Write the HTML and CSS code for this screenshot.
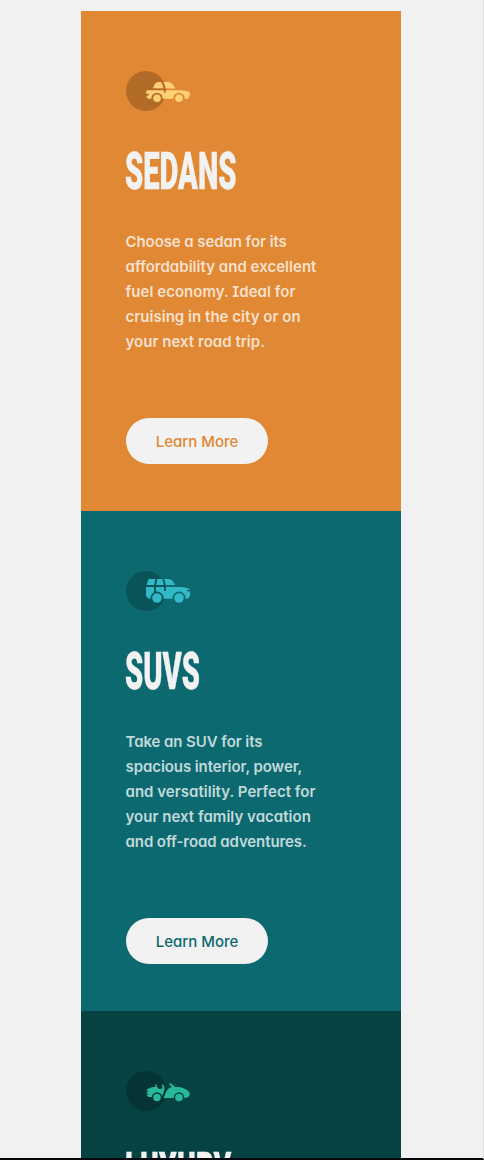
FILE: index.html
```
<!DOCTYPE html>
<html lang="en">
<head>
<meta charset="utf-8">
<title>Car categories</title>
<link rel="stylesheet" href="styles.css">
</head>
<body>
<main class="cards">
  <section class="card sedans">
    <svg class="icon" viewBox="0 0 64 40" aria-hidden="true">
      <defs><mask id="m1"><rect width="64" height="40" fill="#fff"/><circle cx="31" cy="27.3" r="5.6"/><circle cx="53" cy="27.3" r="5.6"/><path d="M35.5 10.5Q38.8 14 39 21.5" fill="none" stroke="#000" stroke-width="2"/></mask></defs>
      <circle cx="20" cy="20" r="20" fill="#000" opacity=".2"/>
      <g fill="#ffd075"><path mask="url(#m1)" d="M27 17.3Q29 11 32 11H42Q46.5 11 49.3 17.5ZM21 19.2H56Q61.5 19.6 64 21.2Q63.8 25.5 62 27.8H22Q20.5 26.5 20.5 25L23 24V23L20 22.5Q20 20 21 19.2Z"/><circle cx="31" cy="27.3" r="3.8"/><circle cx="53" cy="27.3" r="3.8"/></g>
    </svg>
    <h2 class="title"><span class="condensed">SEDANS</span></h2>
    <p class="copy"><span class="snug">Choose a sedan for its</span><br>affordability and excellent<br>fuel economy. Ideal for<br>cruising in the city or on<br>your next road trip.</p>
    <a class="button">Learn More</a>
  </section>
  <section class="card suvs">
    <svg class="icon" viewBox="0 0 64 40" aria-hidden="true">
      <defs><mask id="m2"><rect width="64" height="40" fill="#fff"/><circle cx="31" cy="27" r="6.5"/><circle cx="53" cy="27" r="6.5"/><path d="M30.5 7.5L29 14.5V21M37 7.5Q39 12 39 20" fill="none" stroke="#000" stroke-width="1.9"/></mask></defs>
      <circle cx="20" cy="20" r="20" fill="#000" opacity=".2"/>
      <g fill="#32b8c6"><path mask="url(#m2)" d="M22.5 8H43Q46.5 8 49 14.1H20.5ZM20 16H53Q60 16 63.5 18V19H61V20.5H64V25L62 27.7H22.5L20 25Z"/><circle cx="31" cy="27" r="4.8"/><circle cx="53" cy="27" r="4.8"/></g>
    </svg>
    <h2 class="title"><span class="condensed">SUVS</span></h2>
    <p class="copy"><span class="snug">Take an SUV for its</span><br><span class="snug">spacious interior, power,</span><br>and versatility. Perfect for<br>your next family vacation<br><span class="snug">and off-road adventures.</span></p>
    <a class="button">Learn More</a>
  </section>
  <section class="card luxury">
    <svg class="icon" viewBox="0 0 64 40" aria-hidden="true">
      <defs><mask id="m3"><rect width="64" height="40" fill="#fff"/><circle cx="31" cy="26.5" r="5.2"/><circle cx="53" cy="26.5" r="5.2"/></mask></defs>
      <circle cx="20" cy="20" r="20" fill="#000" opacity=".2"/>
      <g fill="#28b89a"><path mask="url(#m3)" d="M20.5 18.5Q25 16 30 15.5L28.7 14L30 13L32 17.5Q34 18.5 36.5 17.3L35.8 13.8L37.2 13.2Q39.3 17 38 20.5L35.5 26.5L22.5 26L20.5 24.5L22.5 23L20 22L22 20.5ZM37.5 27Q39.5 21.5 41.5 18.5Q43 16.5 46 16L43 13L44.5 12L49 16Q59 15.5 63.5 21.5Q64.5 24.5 62 26.3L58 27Z"/><circle cx="31" cy="26.5" r="3.8"/><circle cx="53" cy="26.5" r="3.8"/></g>
    </svg>
    <h2 class="title"><span class="condensed">LUXURY</span></h2>
  </section>
</main>
</body>
</html>
```
FILE: styles.css
```
* { box-sizing: border-box; }
html { height: 100%; overflow: hidden; }
body {
  margin: 0;
  height: 1160px;
  padding: 11px 0 0 81px;
  overflow: hidden;
  background: #f1f1f1;
  border-bottom: 2px solid #05070d;
  border-right: 1px solid #e4e4e4;
  font-family: Inter, "Open Sans", sans-serif;
}
.cards { width: 320px; }
.card {
  height: 500px;
  padding: 60px 45px 47px;
  display: flex;
  flex-direction: column;
  align-items: flex-start;
}
.sedans { background: #e08833; color: #e08833; }
.suvs { background: #0c696f; color: #0c696f; }
.luxury { height: 147px; overflow: hidden; padding-bottom: 0; background: #064242; color: #064242; }
.icon { width: 64px; height: 40px; flex: none; display: block; }
.title {
  margin: 31px 0 0 -1px;
  height: 60px;
  flex: none;
  line-height: 60px;
  color: #f2f2f2;
  font-family: Roboto, sans-serif;
  font-size: 52px;
  font-weight: 900;
  white-space: nowrap;
  -webkit-text-stroke: .4px #f2f2f2;
}
.condensed { display: inline-block; transform: scaleX(.56); transform-origin: left; }
.luxury .condensed { transform: scaleX(.545); }
.copy {
  margin: 27px 0 0 -.5px;
  height: 125px;
  color: rgba(255, 255, 255, .75);
  font-size: 15px;
  font-weight: 600;
  line-height: 25px;
  letter-spacing: .03px;
  white-space: nowrap;
  font-feature-settings: "cv11", "cv08";
}
.snug { letter-spacing: -.08px; }
.button {
  margin-top: auto;
  width: 142px;
  height: 46px;
  border-radius: 23px;
  background: #f2f2f2;
  line-height: 48px;
  text-align: center;
  font-size: 15px;
  font-weight: 500;
  font-feature-settings: "cv11";
}
```
